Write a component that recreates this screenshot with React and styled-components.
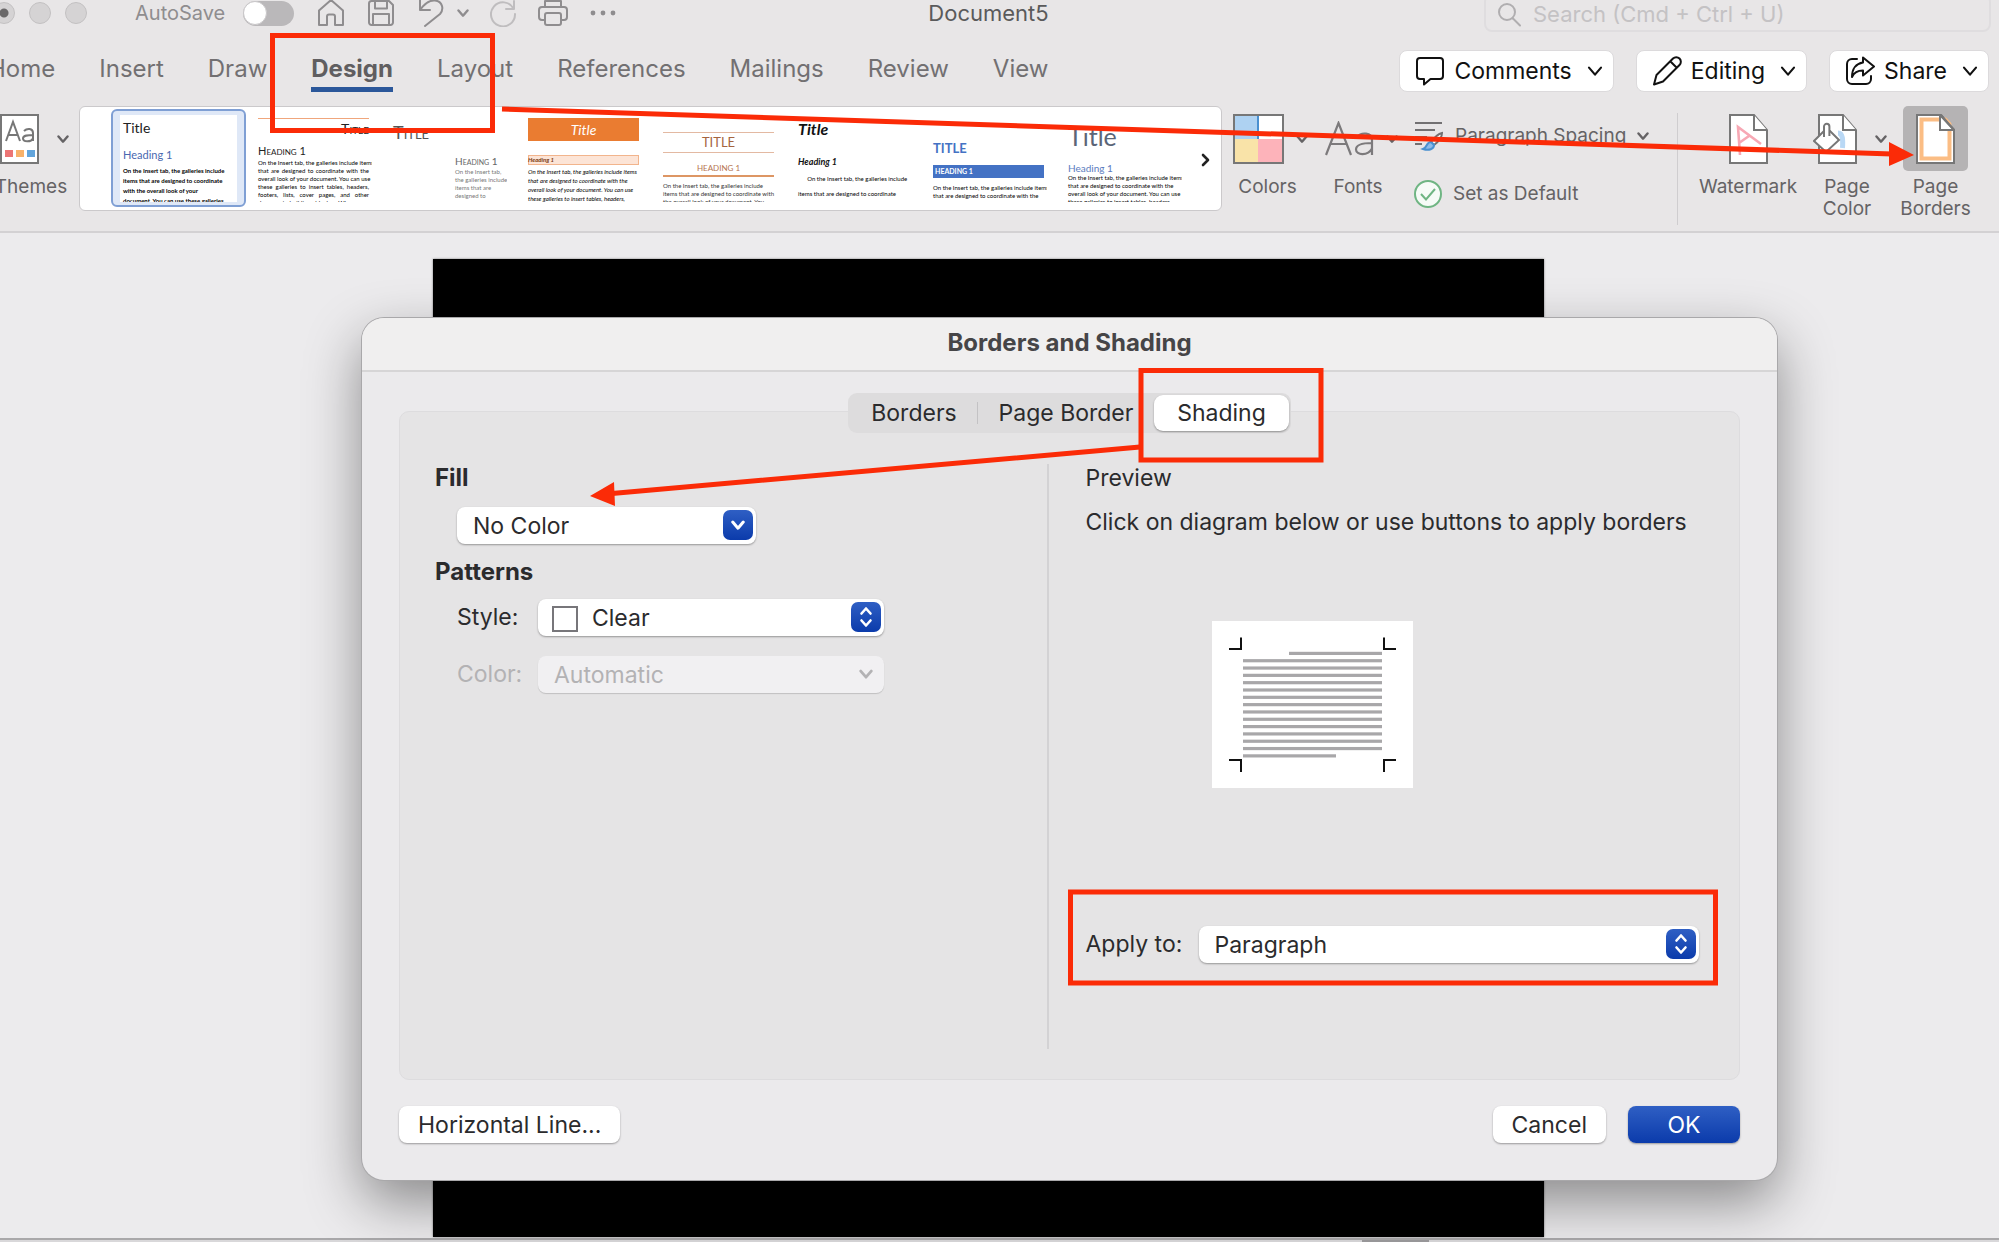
import React from "react";
import styled, { createGlobalStyle, css } from "styled-components";

const Global = createGlobalStyle`
  *, *::before, *::after { box-sizing: border-box; }
  body {
    margin: 0;
    background: #ecebed;
    color: #2b2b2d;
    font-family: Inter, "Liberation Sans", sans-serif;
    font-size: 23px;
    line-height: 28px;
  }
  button, input, select { font: inherit; color: inherit; margin: 0; }
  button { border: 0; padding: 0; background: none; }
  svg { display: block; flex: none; }
`;

const Window = styled.div`
  position: relative;
  display: flex;
  flex-direction: column;
  min-height: 100vh;
  overflow: hidden;
`;

/* ---------- title bar ---------- */

const Ribbon = styled.header`
  background: #e8e6e7;
  border-bottom: 2px solid #d3d1d3;
`;

const TitleBar = styled.div`
  display: grid;
  grid-template-columns: 1fr auto 1fr;
  align-items: center;
  height: 36px;
  margin-top: -6px;
  padding-right: 8px;
  color: #5a5a5b;
`;

const QuickAccess = styled.div`
  display: flex;
  align-items: center;
  margin-left: -7px;
  color: #8f8d8f;
`;

const Lights = styled.div`
  display: flex;
  gap: 14px;
  margin-right: 48px;
`;

const Light = styled.button`
  width: 22px;
  height: 22px;
  border: 1px solid #c3c1c2;
  border-radius: 50%;
  background: ${(p) => (p.$edited ? "radial-gradient(circle, #6a6869 4px, #d5d3d4 5px)" : "#d5d3d4")};
`;

const AutoSave = styled.label`
  display: flex;
  align-items: center;
  gap: 18px;
  margin-right: 22px;
  font-size: 20px;
`;

const Toggle = styled.input`
  appearance: none;
  width: 51px;
  height: 25px;
  border-radius: 13px;
  background: #bab8ba;
  &::before {
    content: "";
    display: block;
    width: 24px;
    height: 24px;
    border: 1px solid #c9c7c9;
    border-radius: 50%;
    background: #fff;
  }
`;

const IconButton = styled.button`
  display: flex;
  justify-content: center;
  width: ${(p) => p.$width || 30}px;
  margin-right: ${(p) => p.$after || 20}px;
  opacity: ${(p) => (p.disabled ? 0.45 : 1)};
`;

const DocName = styled.h1`
  margin: 0 14px 0 0;
  font-size: 22px;
  font-weight: 400;
`;

const SearchBox = styled.label`
  display: flex;
  align-items: center;
  justify-self: end;
  gap: 12px;
  width: 507px;
  height: 38px;
  padding: 2px 11px 0;
  border: 2px solid #dfdddf;
  border-radius: 8px;
  color: #b0aeb0;
`;

const SearchInput = styled.input`
  flex: 1;
  min-width: 0;
  border: 0;
  padding: 0;
  background: none;
  font-size: 22px;
  &::placeholder { color: #c4c2c4; opacity: 1; }
`;

/* ---------- ribbon tabs ---------- */

const TabRow = styled.div`
  display: flex;
  align-items: center;
  justify-content: space-between;
  height: 76px;
  padding: 4px 10px 0 0;
`;

const Tabs = styled.nav`
  display: flex;
  gap: 44px;
  margin-left: -12px;
`;

const Tab = styled.a`
  padding: 6px 0 4px;
  border-bottom: 5px solid transparent;
  color: #727072;
  font-size: 24px;
  text-decoration: none;
  ${(p) =>
    p.$active &&
    css`
      color: #605e60;
      font-weight: 700;
      border-image: linear-gradient(#2b579a, #2b579a) 1;
    `}
`;

const Actions = styled.div`
  display: flex;
  gap: 22px;
  padding-top: 2px;
`;

const ActionButton = styled.button`
  display: flex;
  align-items: center;
  gap: 9px;
  height: 42px;
  padding: 0 10px 0 15px;
  border: 1px solid #dcdadc;
  border-radius: 8px;
  background: #fff;
  color: #111;
  svg:last-child { margin-left: 6px; }
`;

/* ---------- ribbon tools ---------- */

const Tools = styled.div`
  display: flex;
  align-items: flex-start;
  height: 125px;
  padding-right: 31px;
  color: #656365;
`;

const ToolGroup = styled.div`
  display: flex;
  gap: 16px;
  padding-left: ${(p) => p.$lead}px;
`;

const Tool = styled.button`
  display: flex;
  flex-direction: column;
  align-items: center;
  gap: 5px;
  width: ${(p) => p.$width}px;
  font-size: 19px;
  line-height: 22px;
  white-space: nowrap;
`;

const ToolIcon = styled.span`
  display: flex;
  align-items: center;
  justify-content: center;
  gap: ${(p) => p.$gap || 12}px;
  width: ${(p) => (p.$pressed ? "65px" : "auto")};
  height: 65px;
  border-radius: 5px;
  background: ${(p) => (p.$pressed ? "#b5b3b4" : "none")};
`;

const ToolLabel = styled.span`
  padding-right: ${(p) => (p.$menu ? 6 : 0)}px;
`;

const ThemesSlot = styled.div`
  width: 81px;
  margin-left: -2px;
`;

const ToolList = styled.div`
  display: flex;
  flex-direction: column;
  gap: 30px;
  width: 247px;
  padding-top: 16px;
`;

const ListTool = styled.button`
  display: flex;
  align-items: center;
  gap: 11px;
  height: 28px;
  font-size: 19px;
  white-space: nowrap;
`;

const Divider = styled.div`
  width: 1px;
  height: 112px;
  margin: 7px 5px 0 0;
  background: #cfcdcf;
`;

/* ---------- style gallery ---------- */

const Gallery = styled.div`
  display: flex;
  flex: 1;
  height: 105px;
  padding: 2px 0 0 31px;
  border: 1px solid #cbc9cb;
  border-radius: 6px;
  background: #fff;
  color: #222;
  font-family: Lato, "Open Sans", sans-serif;
`;

const Card = styled.button`
  width: 135px;
  height: 98px;
  padding: 4px;
  border: 2px solid ${(p) => (p.$active ? "#7f9fd4" : "transparent")};
  border-radius: 6px;
  background: ${(p) => (p.$active ? "#dfe8f7" : "none")};
  color: inherit;
`;

const Sheet = styled.span`
  display: block;
  height: 87px;
  margin: 0 3px;
  padding: 0 3px;
  overflow: hidden;
  background: #fff;
  text-align: left;
`;

const Sample = styled.span`
  display: block;
  margin-top: ${(p) => p.$top || 0}px;
  padding-left: ${(p) => p.$indent || 0}px;
  color: ${(p) => p.$color || "inherit"};
  background: ${(p) => p.$fill || "none"};
  box-shadow: ${(p) => (p.$edge ? `inset 0 0 0 1px ${p.$edge}` : "none")};
  text-align: ${(p) => p.$align || "left"};
  font-style: ${(p) => (p.$italic ? "italic" : "normal")};
  font-variant: ${(p) => (p.$caps ? "small-caps" : "normal")};
  font-weight: ${(p) => (p.$bold ? 700 : 400)};
  white-space: nowrap;
`;

const SampleTitle = styled(Sample)`
  font-size: ${(p) => p.$size || 14}px;
  line-height: ${(p) => p.$line || 20}px;
`;

const SampleHeading = styled(Sample)`
  font-size: ${(p) => p.$size || 9}px;
  line-height: ${(p) => p.$line || 14}px;
`;

const SampleBody = styled(Sample)`
  color: ${(p) => p.$color || "#000"};
  font-size: 6px;
  line-height: ${(p) => p.$line || 8}px;
`;

const SampleLine = styled.span`
  display: block;
  text-align-last: ${(p) => (p.$justify ? "justify" : "auto")};
`;

const Rule = styled.span`
  display: block;
  height: ${(p) => p.$weight || 1}px;
  margin-top: ${(p) => p.$top || 0}px;
  background: ${(p) => p.$color};
`;

const MoreStyles = styled.button`
  display: flex;
  align-items: center;
  justify-content: center;
  flex: 1;
  color: #222;
`;

/* ---------- workspace ---------- */

const Workspace = styled.main`
  display: grid;
  flex: 1;
  background: #ecebed;
`;

const Page = styled.div`
  grid-area: 1 / 1;
  margin: 26px 455px 1px 433px;
  background: #000;
  box-shadow: 0 0 2px #777;
`;

const StatusEdge = styled.div`
  height: 4px;
  padding: 0 570px 0 0;
  border-top: 2px solid #a9a8aa;
  background: #d9d8da;
`;

const ScrollThumb = styled.div`
  width: 67px;
  height: 2px;
  margin-left: auto;
  background: #9c9b9d;
`;

/* ---------- dialog ---------- */

const Dialog = styled.section`
  grid-area: 1 / 1;
  align-self: start;
  z-index: 1;
  margin: 85px 222px 48px 362px;
  border-radius: 22px;
  background: #ebeaec;
  box-shadow: 0 0 0 1px #a9a8aa, 0 22px 56px rgba(0, 0, 0, 0.42);
`;

const DialogTitle = styled.h2`
  margin: 0;
  padding: 11px 0 13px;
  border-bottom: 2px solid #d6d5d6;
  border-radius: 22px 22px 0 0;
  background: #f0efef;
  color: #464547;
  font-size: 24px;
  font-weight: 700;
  text-align: center;
`;

const DialogBody = styled.div`
  padding: 21px 37px 37px;
`;

const Segments = styled.div`
  position: relative;
  display: flex;
  width: max-content;
  margin: 0 auto -22px;
  padding: 2px;
  border-radius: 9px;
  background: #dddcdd;
`;

const Segment = styled.button`
  width: ${(p) => p.$width}px;
  height: 36px;
  ${(p) =>
    p.$divided &&
    css`
      background: linear-gradient(#c3c2c4, #c3c2c4) right center / 1px 22px no-repeat;
    `}
  ${(p) =>
    p.$active &&
    css`
      border-radius: 9px;
      background: #fff;
      box-shadow: 0 1px 2px rgba(0, 0, 0, 0.35);
    `}
`;

const Panel = styled.div`
  display: grid;
  grid-template-columns: 614fr 651fr;
  padding: 52px 40px 30px 35px;
  border: 1px solid #dddcde;
  border-radius: 10px;
  background: #e5e4e5;
`;

const Settings = styled.div`
  display: flex;
  flex-direction: column;
  align-items: flex-start;
  border-right: 2px solid #d3d2d4;
`;

const Heading = styled.h3`
  margin: ${(p) => p.$top || 0}px 0 0;
  font-size: ${(p) => (p.$plain ? 23 : 24)}px;
  font-weight: ${(p) => (p.$plain ? 400 : 700)};
`;

const Field = styled.div`
  display: flex;
  align-items: center;
  margin: ${(p) => p.$top}px 0 0 ${(p) => p.$left || 0}px;
`;

const FieldLabel = styled.label`
  width: ${(p) => p.$width}px;
  padding-bottom: 2px;
  color: ${(p) => (p.$muted ? "#b3b2b4" : "inherit")};
`;

const Picker = styled.div`
  position: relative;
  flex: ${(p) => (p.$width ? "none" : 1)};
  width: ${(p) => (p.$width ? `${p.$width}px` : "auto")};
`;

const Select = styled.select`
  display: block;
  appearance: none;
  width: 100%;
  height: 37px;
  padding: 0 40px 0 ${(p) => (p.$swatch ? 54 : 16)}px;
  border: 0;
  border-radius: 8px;
  background: #fff;
  box-shadow: 0 1px 2px rgba(0, 0, 0, 0.35);
  &:disabled {
    background: #f1f0f2;
    box-shadow: 0 1px 1px rgba(0, 0, 0, 0.16);
    color: #b3b2b4;
    opacity: 1;
  }
`;

const PickerMark = styled.span`
  position: absolute;
  top: 3px;
  right: 3px;
  display: flex;
  align-items: center;
  justify-content: center;
  width: 30px;
  height: 30px;
  border-radius: 7px;
  background: ${(p) => (p.$muted ? "none" : "linear-gradient(#2f5fc4, #0b3bab)")};
  color: ${(p) => (p.$muted ? "#b3b2b4" : "#fff")};
  pointer-events: none;
`;

const Swatch = styled.span`
  position: absolute;
  top: 7px;
  left: 14px;
  width: 26px;
  height: 26px;
  border: 2px solid #77767a;
  background: #fff;
  pointer-events: none;
`;

const PreviewColumn = styled.div`
  height: 585px;
  padding-left: 37px;
`;

const Hint = styled.p`
  margin: 16px 0 85px;
  white-space: nowrap;
`;

const PreviewSheet = styled.svg`
  margin: 0 0 138px 126px;
  background: #fff;
`;

const Footer = styled.div`
  display: flex;
  gap: 22px;
  margin-top: 26px;
`;

const PushButton = styled.button`
  min-width: 112px;
  height: 37px;
  margin-right: ${(p) => (p.$pushRest ? "auto" : 0)};
  padding: 0 19px;
  border-radius: 8px;
  background: ${(p) => (p.$primary ? "linear-gradient(#2f5fc4, #0b3bab)" : "#fff")};
  box-shadow: 0 1px 2px rgba(0, 0, 0, 0.35);
  color: ${(p) => (p.$primary ? "#fff" : "inherit")};
`;

const Markup = styled.svg`
  position: absolute;
  top: 0;
  left: 0;
  z-index: 2;
  pointer-events: none;
`;

/* ---------- drawings ---------- */

const Chevron = ({ size = 12, weight = 2.4 }) => (
  <svg width={size} height={size} viewBox="0 0 12 12" fill="none" stroke="currentColor" strokeWidth={weight} strokeLinecap="round" strokeLinejoin="round">
    <path d="M1.5 3.5 6 8.7l4.5-5.2" />
  </svg>
);

const Glyph = ({ children, w = 28, h = 28 }) => (
  <svg width={w} height={h} viewBox={`0 0 ${w} ${h}`} fill="none" stroke="currentColor" strokeWidth="2" strokeLinejoin="round" strokeLinecap="round">
    {children}
  </svg>
);

const HomeIcon = () => (
  <Glyph><path d="M2 11.5 14 1l12 10.500V26h-8v-8.500a2 2 0 0 0-2-2h-4a2 2 0 0 0-2 2V26H2z" /></Glyph>
);
const SaveIcon = () => (
  <Glyph><path d="M2 4.500A2.500 2.500 0 0 1 4.500 2H22l4 4v17.500a2.500 2.500 0 0 1-2.500 2.500h-19A2.500 2.500 0 0 1 2 23.500zM8 2v7.500h12V2M6 26V15h16v11" /></Glyph>
);
const UndoIcon = () => (
  <Glyph><path d="M3 1v10h10M3 11C8 4 13 1 18 1.500c8 1 9 9 5 13.500L8 27" /></Glyph>
);
const RedoIcon = () => (
  <Glyph><path d="M25 2v8h-8M24.500 9.500A12 12 0 1 0 26 15" /></Glyph>
);
const PrintIcon = () => (
  <Glyph w={30}><path d="M7 8V2h16v6M7 21H4a3 3 0 0 1-3-3v-7a3 3 0 0 1 3-3h22a3 3 0 0 1 3 3v7a3 3 0 0 1-3 3h-3M9 14h12a2 2 0 0 1 2 2v8a2 2 0 0 1-2 2H9a2 2 0 0 1-2-2v-8a2 2 0 0 1 2-2z" /></Glyph>
);
const MoreIcon = () => (
  <Glyph w={26}><g fill="currentColor" stroke="none"><circle cx="3" cy="14" r="2.400" /><circle cx="13" cy="14" r="2.400" /><circle cx="23" cy="14" r="2.400" /></g></Glyph>
);
const SearchIcon = () => (
  <Glyph w={24} h={26}><circle cx="10" cy="11" r="8" /><path d="m16 17.500 7 7" /></Glyph>
);
const CommentIcon = () => (
  <Glyph w={30} h={30}><path d="M5 2h20a3 3 0 0 1 3 3v15a3 3 0 0 1-3 3H15.500L9 28.500V23H5a3 3 0 0 1-3-3V5a3 3 0 0 1 3-3z" /></Glyph>
);
const PencilIcon = () => (
  <Glyph w={30} h={30}><path d="M2 28.500 4.500 19 21 2.500a4.500 4.500 0 0 1 6.500 6.500L11 25.500zM18.500 5.500l6 6" /></Glyph>
);
const ShareIcon = () => (
  <Glyph w={30} h={30}><path d="M12 3H7a5 5 0 0 0-5 5v15a5 5 0 0 0 5 5h14a5 5 0 0 0 5-5v-3M18 1.500l11 9-11 9v-5c-5 0-9 2-11 6.500C7 13 11 7.500 18 6.500z" /></Glyph>
);
const ThemesIcon = () => (
  <svg width="39" height="50" viewBox="0 0 39 50" fill="none">
    <path d="M1 1h37v48H1z" fill="#fff" stroke="#777" strokeWidth="2" />
    <path d="m6 27 7-19 7 19M8.500 21h9M24 17c3-3 9-3 9 2v8M33 21c-5 0-10 0-10 3.500s8 4 10 0" stroke="#777" strokeWidth="2" />
    <path d="M5 36h8v7H5z" fill="#ec7575" />
    <path d="M16 36h8v7h-8z" fill="#f8b26a" />
    <path d="M27 36h8v7h-8z" fill="#62a5dc" />
  </svg>
);
const ColorsIcon = () => (
  <svg width="51" height="50" viewBox="0 0 51 50">
    <path d="M1 1h24v24H1z" fill="#aed2f2" />
    <path d="M25 1h25v24H25z" fill="#fff" />
    <path d="M1 25h24v24H1z" fill="#f9e3a8" />
    <path d="M25 25h25v24H25z" fill="#fdb3ba" />
    <path d="M25 1v24" stroke="#4a90d0" strokeWidth="2" />
    <path d="M1 1h49v48H1z" fill="none" stroke="#777" strokeWidth="2" />
  </svg>
);
const FontsIcon = () => (
  <svg width="49" height="36" viewBox="0 0 49 36" fill="none" stroke="#7c7a7c" strokeWidth="2.200">
    <path d="M1 34 13.500 2 26 34M5.500 23h16M32 16c4-5 15-5 15 3v15M47 22c-7 0-16 .5-16 6.500s12 6.500 16-1" />
  </svg>
);
const SpacingIcon = () => (
  <svg width="30" height="30" viewBox="0 0 30 30" fill="none" stroke="#727072" strokeWidth="2">
    <path d="M1 2h27M1 9h20M1 16h12M1 23h7" />
    <path d="M28 12c-4 1-8 5-11 9l3 3c4-3 8-8 8-12z" fill="#fff" />
    <path d="M17 21c-5 0-3 5-8 7 6 2 11 0 11-4z" fill="#8dbbea" stroke="#4a90d0" />
  </svg>
);
const DefaultIcon = () => (
  <svg width="28" height="28" viewBox="0 0 28 28" fill="none" stroke="#6fb583" strokeWidth="2">
    <circle cx="14" cy="14" r="13" fill="#f6fbf7" />
    <path d="m7 14 5 5.500L21 9" />
  </svg>
);
const sheetShape = "M1 1h24l13 15v33H1z";
const fold = "M25 1v15h13";
const WatermarkIcon = () => (
  <svg width="39" height="50" viewBox="0 0 39 50" fill="#fff" stroke="#777" strokeWidth="2">
    <path d={sheetShape} /><path d={fold} />
    <path d="M11 41 9 13l23 17M10 29l10-7" fill="none" stroke="#f7a8b4" strokeWidth="2.600" />
  </svg>
);
const PageColorIcon = () => (
  <svg width="44" height="50" viewBox="0 0 44 50" fill="#fff" stroke="#777" strokeWidth="2">
    <g transform="translate(5)"><path d={sheetShape} /><path d={fold} /></g>
    <path d="M25 19c5 0 5 7 4.500 15" fill="none" stroke="#b9d8f5" strokeWidth="5" />
    <path d="M11 17 1 27l12 11 13-12-9-9z" />
    <path d="M11 23V12.500a2.700 2.700 0 0 1 5.400 0V22" />
  </svg>
);
const PageBordersIcon = () => (
  <svg width="39" height="50" viewBox="0 0 39 50" fill="#fff" stroke="#777" strokeWidth="2">
    <path d={sheetShape} />
    <path d="M5.500 5.500h28v39h-28z" stroke="#fbbd84" strokeWidth="4" />
    <path d="M24 1v15h14z" /><path d="M26-1h14v15z" fill="#b5b3b4" stroke="none" />
    <path d="m25 1 13 15" />
  </svg>
);
const UpDown = () => (
  <svg width="14" height="22" viewBox="0 0 14 22" fill="none" stroke="currentColor" strokeWidth="2.600" strokeLinecap="round" strokeLinejoin="round">
    <path d="m2.500 7.500 4.500-5 4.500 5M2.500 14.500l4.500 5 4.500-5" />
  </svg>
);

/* ---------- content ---------- */

const ribbonTabs = ["Home", "Insert", "Draw", "Design", "Layout", "References", "Mailings", "Review", "View"];

const Body = ({ lines, justify, ...rest }) => (
  <SampleBody {...rest}>
    {lines.map((text) => (
      <SampleLine key={text} $justify={justify}>{text}</SampleLine>
    ))}
  </SampleBody>
);

const wide = [
  "On the Insert tab, the galleries include items",
  "that are designed to coordinate with the",
  "overall look of your document. You can use",
  "these galleries to insert tables, headers,",
];

const StyleGallery = () => (
  <Gallery>
    <Card $active>
      <Sheet>
        <SampleTitle $line={26}>Title</SampleTitle>
        <SampleHeading $top={4} $size={11} $line={20} $color="#4a68b0">Heading 1</SampleHeading>
        <Body $top={1} $line={10} $bold lines={["On the Insert tab, the galleries include", "items that are designed to coordinate", "with the overall look of your", "document. You can use these galleries"]} />
      </Sheet>
    </Card>
    <Card>
      <Sheet>
        <Rule $top={3} $color="#f0a67c" />
        <SampleTitle $caps $align="right">Title</SampleTitle>
        <SampleHeading $top={5} $size={11} $caps>Heading 1</SampleHeading>
        <Body $top={1} justify lines={[wide[0], wide[1], wide[2], wide[3], "footers, lists, cover pages, and other", "document building blocks. When you"]} />
      </Sheet>
    </Card>
    <Card>
      <Sheet>
        <SampleTitle $top={7} $caps $size={18} $color="#555">Title</SampleTitle>
        <SampleHeading $top={12} $indent={62} $size={10} $caps $color="#666">Heading 1</SampleHeading>
        <Body $indent={62} $color="#777" lines={["On the Insert tab,", "the galleries include", "items that are", "designed to"]} />
      </Sheet>
    </Card>
    <Card>
      <Sheet>
        <SampleTitle $top={3} $line={23} $size={14} $italic $align="center" $fill="#ea7c31" $color="#fff">Title</SampleTitle>
        <SampleHeading $top={14} $line={10} $size={6} $italic $bold $fill="#fce4d6" $edge="#f2b48c" $color="#7a3b10">Heading 1</SampleHeading>
        <Body $top={2} $line={9} $italic lines={wide} />
      </Sheet>
    </Card>
    <Card>
      <Sheet>
        <Rule $top={17} $color="#e3b9a2" />
        <SampleTitle $line={18} $size={13} $align="center" $color="#a5643f">TITLE</SampleTitle>
        <Rule $top={1} $color="#e3b9a2" />
        <SampleHeading $top={8} $size={8} $align="center" $color="#b5744f">HEADING 1</SampleHeading>
        <Rule $weight={2} $color="#dd9664" />
        <Body $top={5} $color="#333" lines={["On the Insert tab, the galleries include", "items that are designed to coordinate with", "the overall look of your document. You"]} />
      </Sheet>
    </Card>
    <Card>
      <Sheet>
        <SampleTitle $top={4} $size={16} $italic $bold $color="#111">Title</SampleTitle>
        <SampleHeading $top={16} $italic $bold $color="#111">Heading 1</SampleHeading>
        <Body $top={2} $line={15} lines={["\u00a0\u00a0\u00a0\u00a0\u00a0\u00a0On the Insert tab, the galleries include", "items that are designed to coordinate"]} />
      </Sheet>
    </Card>
    <Card>
      <Sheet>
        <SampleTitle $top={23} $size={13} $bold $color="#4472c4">TITLE</SampleTitle>
        <SampleHeading $top={7} $line={13} $size={7} $indent={2} $bold $fill="#4472c4" $color="#fff">HEADING 1</SampleHeading>
        <Body $top={6} lines={wide.slice(0, 2)} />
      </Sheet>
    </Card>
    <Card>
      <Sheet>
        <SampleTitle $top={9} $line={24} $size={25} $color="#5b6577">Title</SampleTitle>
        <SampleHeading $top={14} $line={12} $size={10} $color="#5b7cc0">Heading 1</SampleHeading>
        <Body lines={wide} />
      </Sheet>
    </Card>
    <MoreStyles aria-label="More styles">
      <Glyph w={10} h={14}><path d="m2 2 5 5-5 5" strokeWidth="2.600" /></Glyph>
    </MoreStyles>
  </Gallery>
);

const previewRows = Array.from({ length: 15 }, (_, i) => i);

const Preview = () => (
  <PreviewSheet width="201" height="167" viewBox="0 0 201 167">
    {previewRows.map((i) => {
      const from = i === 0 ? 77 : 31;
      const to = i === 14 ? 124 : 170;
      return <rect key={i} x={from} y={30.800 + i * 7.320} width={to - from} height="3.200" fill="#a8a7a9" />;
    })}
    <path d="M17 28h12V16.500M184 28h-12V16.500M17 139h12v12M184 139h-12v12" fill="none" stroke="#111" strokeWidth="2" />
  </PreviewSheet>
);

const MarkupLayer = () => (
  <Markup width="1999" height="1242" viewBox="0 0 1999 1242" fill="none" stroke="#fb2b07" strokeWidth="5">
    <rect x="272.500" y="35.500" width="220" height="95" />
    <rect x="1141" y="370.500" width="180" height="89.500" />
    <rect x="1070.500" y="892" width="645" height="91" />
    <path d="M502 109 1892 154M1140 447 612 493.500" />
    <path d="m1914 155-25-13v24zM590 496l24-14 1 24z" fill="#fb2b07" stroke="none" />
  </Markup>
);

export default function App() {
  return (
    <>
      <Global />
      <Window>
        <Ribbon>
          <TitleBar>
            <QuickAccess>
              <Lights>
                <Light $edited aria-label="Close" />
                <Light aria-label="Minimize" />
                <Light aria-label="Zoom" />
              </Lights>
              <AutoSave>
                AutoSave
                <Toggle type="checkbox" />
              </AutoSave>
              <IconButton aria-label="Home"><HomeIcon /></IconButton>
              <IconButton aria-label="Save"><SaveIcon /></IconButton>
              <IconButton aria-label="Undo" $after={10}><UndoIcon /></IconButton>
              <IconButton aria-label="Undo history" $width={14} $after={18}><Chevron /></IconButton>
              <IconButton aria-label="Redo" disabled><RedoIcon /></IconButton>
              <IconButton aria-label="Print"><PrintIcon /></IconButton>
              <IconButton aria-label="More"><MoreIcon /></IconButton>
            </QuickAccess>
            <DocName>Document5</DocName>
            <SearchBox>
              <SearchIcon />
              <SearchInput type="search" aria-label="Search" placeholder="Search (Cmd + Ctrl + U)" />
            </SearchBox>
          </TitleBar>
          <TabRow>
            <Tabs>
              {ribbonTabs.map((name) => (
                <Tab key={name} href="#" $active={name === "Design"}>{name}</Tab>
              ))}
            </Tabs>
            <Actions>
              <ActionButton><CommentIcon />Comments<Chevron size={16} weight={1.600} /></ActionButton>
              <ActionButton><PencilIcon />Editing<Chevron size={16} weight={1.600} /></ActionButton>
              <ActionButton><ShareIcon />Share<Chevron size={16} weight={1.600} /></ActionButton>
            </Actions>
          </TabRow>
          <Tools>
            <ThemesSlot>
              <Tool $width={72}>
                <ToolIcon $gap={18}><ThemesIcon /><Chevron /></ToolIcon>
                <ToolLabel $menu>Themes</ToolLabel>
              </Tool>
            </ThemesSlot>
            <StyleGallery />
            <ToolGroup $lead={11}>
              <Tool $width={75}>
                <ToolIcon><ColorsIcon /><Chevron /></ToolIcon>
                <ToolLabel $menu>Colors</ToolLabel>
              </Tool>
              <Tool $width={74}>
                <ToolIcon><FontsIcon /><Chevron /></ToolIcon>
                <ToolLabel $menu>Fonts</ToolLabel>
              </Tool>
              <ToolList>
                <ListTool><SpacingIcon />Paragraph Spacing<Chevron /></ListTool>
                <ListTool><DefaultIcon />Set as Default</ListTool>
              </ToolList>
              <Divider />
              <Tool $width={98}>
                <ToolIcon><WatermarkIcon /></ToolIcon>
                <ToolLabel>Watermark</ToolLabel>
              </Tool>
              <Tool $width={74}>
                <ToolIcon $gap={18}><PageColorIcon /><Chevron /></ToolIcon>
                <ToolLabel $menu>Page<br />Color</ToolLabel>
              </Tool>
              <Tool $width={65}>
                <ToolIcon $pressed><PageBordersIcon /></ToolIcon>
                <ToolLabel>Page<br />Borders</ToolLabel>
              </Tool>
            </ToolGroup>
          </Tools>
        </Ribbon>

        <Workspace>
          <Page />
          <Dialog role="dialog" aria-labelledby="dialog-title">
            <DialogTitle id="dialog-title">Borders and Shading</DialogTitle>
            <DialogBody>
              <Segments role="tablist">
                <Segment role="tab" $width={128} $divided>Borders</Segment>
                <Segment role="tab" $width={176}>Page Border</Segment>
                <Segment role="tab" $width={135} $active aria-selected="true">Shading</Segment>
              </Segments>
              <Panel>
                <Settings>
                  <Heading>Fill</Heading>
                  <Field $top={15} $left={22}>
                    <Picker $width={299}>
                      <Select aria-label="Fill"><option>No Color</option></Select>
                      <PickerMark><Chevron size={14} weight={2.600} /></PickerMark>
                    </Picker>
                  </Field>
                  <Heading $top={14}>Patterns</Heading>
                  <Field $top={13} $left={22}>
                    <FieldLabel htmlFor="pattern-style" $width={81}>Style:</FieldLabel>
                    <Picker $width={346}>
                      <Select id="pattern-style" $swatch><option>Clear</option></Select>
                      <Swatch />
                      <PickerMark><UpDown /></PickerMark>
                    </Picker>
                  </Field>
                  <Field $top={20} $left={22}>
                    <FieldLabel htmlFor="pattern-color" $width={81} $muted>Color:</FieldLabel>
                    <Picker $width={346}>
                      <Select id="pattern-color" disabled><option>Automatic</option></Select>
                      <PickerMark $muted><Chevron size={14} /></PickerMark>
                    </Picker>
                  </Field>
                </Settings>
                <PreviewColumn>
                  <Heading $plain>Preview</Heading>
                  <Hint>Click on diagram below or use buttons to apply borders</Hint>
                  <Preview />
                  <Field $top={0}>
                    <FieldLabel htmlFor="apply-to" $width={113}>Apply to:</FieldLabel>
                    <Picker>
                      <Select id="apply-to"><option>Paragraph</option></Select>
                      <PickerMark><UpDown /></PickerMark>
                    </Picker>
                  </Field>
                </PreviewColumn>
              </Panel>
              <Footer>
                <PushButton $pushRest>Horizontal Line...</PushButton>
                <PushButton>Cancel</PushButton>
                <PushButton $primary>OK</PushButton>
              </Footer>
            </DialogBody>
          </Dialog>
        </Workspace>
        <StatusEdge><ScrollThumb /></StatusEdge>
        <MarkupLayer />
      </Window>
    </>
  );
}
